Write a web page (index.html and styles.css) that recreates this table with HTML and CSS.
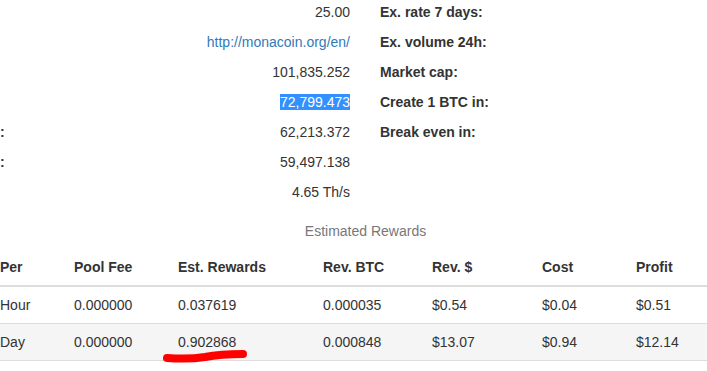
FILE: index.html
```html
<!DOCTYPE html>
<html>
<head>
<meta charset="utf-8">
<link rel="stylesheet" href="styles.css">
</head>
<body>
<div class="info">
  <div class="col-left">
    <div class="row"><span class="lbl"></span><span class="val">25.00</span></div>
    <div class="row"><span class="lbl"></span><span class="val"><a href="#" class="link">http://monacoin.org/en/</a></span></div>
    <div class="row"><span class="lbl"></span><span class="val">101,835.252</span></div>
    <div class="row"><span class="lbl"></span><span class="val"><span class="sel">72,799.473</span></span></div>
    <div class="row"><span class="lbl">:</span><span class="val">62,213.372</span></div>
    <div class="row"><span class="lbl">:</span><span class="val">59,497.138</span></div>
    <div class="row"><span class="lbl"></span><span class="val">4.65 Th/s</span></div>
  </div>
  <div class="col-right">
    <div class="row"><span class="lbl">Ex. rate 7 days:</span></div>
    <div class="row"><span class="lbl">Ex. volume 24h:</span></div>
    <div class="row"><span class="lbl">Market cap:</span></div>
    <div class="row"><span class="lbl">Create 1 BTC in:</span></div>
    <div class="row"><span class="lbl">Break even in:</span></div>
  </div>
</div>
<h4 class="title">Estimated Rewards</h4>
<div class="table-wrap">
<table class="rewards">
  <colgroup>
    <col class="c1"><col class="c2"><col class="c3"><col class="c4"><col class="c5"><col class="c6"><col class="c7">
  </colgroup>
  <thead>
    <tr><th>Per</th><th>Pool Fee</th><th>Est. Rewards</th><th>Rev. BTC</th><th>Rev. $</th><th>Cost</th><th>Profit</th></tr>
  </thead>
  <tbody>
    <tr><td>Hour</td><td>0.000000</td><td>0.037619</td><td>0.000035</td><td>$0.54</td><td>$0.04</td><td>$0.51</td></tr>
    <tr class="alt"><td>Day</td><td>0.000000</td><td>0.902868</td><td>0.000848</td><td>$13.07</td><td>$0.94</td><td>$12.14</td></tr>
  </tbody>
</table>
<svg class="scribble" width="90" height="18" viewBox="0 0 90 18">
  <path d="M4 12 C 18 13, 30 13, 42 11 C 52 9, 62 8, 80 8" stroke="#ff0000" stroke-width="8" stroke-linecap="round" fill="none"/>
</svg>
</div>
</body>
</html>
```
FILE: styles.css
```css
html, body {
  margin: 0;
  padding: 0;
  background: #fff;
}
body {
  font-family: "Liberation Sans", Arial, sans-serif;
  font-size: 14px;
  line-height: 20px;
  color: #333;
  overflow: hidden;
  width: 707px;
  height: 371px;
}
.info {
  display: flex;
  margin-top: -3px;
}
.col-left {
  width: 350px;
}
.col-right {
  padding-left: 30px;
}
.row {
  display: flex;
  height: 30px;
  align-items: center;
}
.col-left .lbl {
  font-weight: bold;
  width: 10px;
}
.col-left .val {
  flex: 1;
  text-align: right;
}
.col-right .lbl {
  font-weight: bold;
}
.link {
  color: #337ab7;
  text-decoration: none;
}
.sel {
  background: #3390ff;
  color: #fff;
}
.title {
  margin: 0;
  margin-top: 14px;
  text-align: center;
  font-weight: normal;
  font-size: 14px;
  line-height: 20px;
  color: #777;
  padding-left: 24px;
}
.table-wrap {
  position: relative;
  margin-top: 8px;
  margin-left: -8px;
}
.rewards {
  border-collapse: collapse;
  table-layout: fixed;
  width: 730px;
}
.c1 { width: 74px; }
.c2 { width: 104px; }
.c3 { width: 145px; }
.c4 { width: 109px; }
.c5 { width: 110px; }
.c6 { width: 94px; }
.c7 { width: 94px; }
.rewards th, .rewards td {
  padding: 8px;
  text-align: left;
  line-height: 20px;
}
.rewards th {
  font-weight: bold;
  border-bottom: 2px solid #ddd;
}
.rewards td {
  border-bottom: 1px solid #ddd;
}
.rewards tr.alt td {
  background: #f5f5f5;
}
.scribble {
  position: absolute;
  left: 171px;
  top: 97px;
}
```
